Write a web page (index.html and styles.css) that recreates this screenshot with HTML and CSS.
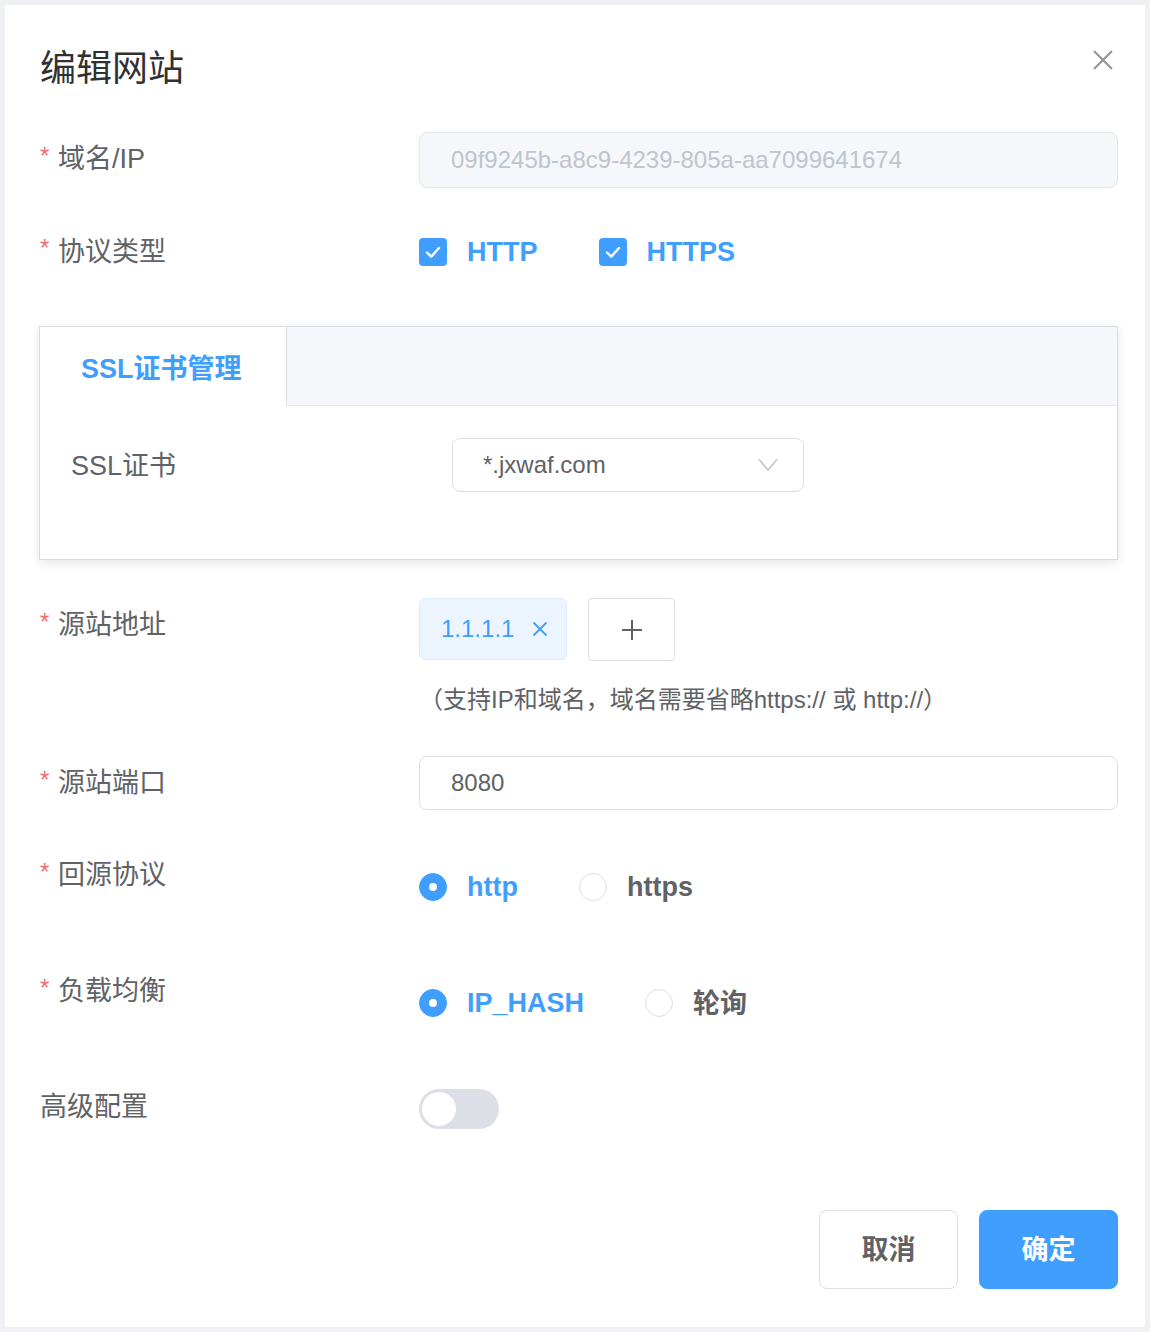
FILE: index.html
```html
<!DOCTYPE html>
<html lang="zh-CN">
<head>
<meta charset="utf-8">
<title>编辑网站</title>
<link rel="stylesheet" href="styles.css">
</head>
<body>
<div class="dialog">
  <div class="dialog-header">
    <span class="dialog-title">编辑网站</span>
    <span class="dialog-close">
      <svg width="20" height="20" viewBox="0 0 20 20"><path d="M1 1 L19 19 M19 1 L1 19" stroke="#909399" stroke-width="2" fill="none"/></svg>
    </span>
  </div>

  <div class="form">
    <div class="form-item item-domain">
      <div class="form-label required">域名/IP</div>
      <div class="form-content">
        <div class="input input-disabled">09f9245b-a8c9-4239-805a-aa7099641674</div>
      </div>
    </div>

    <div class="form-item item-protocol">
      <div class="form-label required">协议类型</div>
      <div class="form-content options">
        <span class="check-option">
          <span class="checkbox"><svg width="28" height="28" viewBox="0 0 28 28"><path d="M8 14.5 L12.3 18.6 L20 10" stroke="#fff" stroke-width="2.4" fill="none" stroke-linecap="round" stroke-linejoin="round"/></svg></span>
          <span class="option-text active">HTTP</span>
        </span>
        <span class="check-option">
          <span class="checkbox"><svg width="28" height="28" viewBox="0 0 28 28"><path d="M8 14.5 L12.3 18.6 L20 10" stroke="#fff" stroke-width="2.4" fill="none" stroke-linecap="round" stroke-linejoin="round"/></svg></span>
          <span class="option-text active">HTTPS</span>
        </span>
      </div>
    </div>

    <div class="tabs-card">
      <div class="tabs-header">
        <div class="tab tab-active">SSL证书管理</div>
      </div>
      <div class="tabs-body">
        <div class="ssl-row">
          <div class="ssl-label">SSL证书</div>
          <div class="select">
            <span>*.jxwaf.com</span>
            <svg width="20" height="14" viewBox="0 0 20 14"><path d="M1 1.5 L10 12 L19 1.5" stroke="#c0c4cc" stroke-width="1.6" fill="none"/></svg>
          </div>
        </div>
      </div>
    </div>

    <div class="form-item item-origin">
      <div class="form-label required">源站地址</div>
      <div class="form-content">
        <div class="tag-row">
          <span class="tag">1.1.1.1
            <svg width="16" height="16" viewBox="0 0 16 16"><path d="M1.5 1.5 L14.5 14.5 M14.5 1.5 L1.5 14.5" stroke="#409eff" stroke-width="1.8" fill="none"/></svg>
          </span>
          <span class="add-btn">
            <svg width="22" height="22" viewBox="0 0 22 22"><path d="M11 1 V21 M1 11 H21" stroke="#606266" stroke-width="2" fill="none"/></svg>
          </span>
        </div>
        <div class="help-text">（支持IP和域名，域名需要省略https:// 或 http://）</div>
      </div>
    </div>

    <div class="form-item item-port">
      <div class="form-label required">源站端口</div>
      <div class="form-content">
        <div class="input">8080</div>
      </div>
    </div>

    <div class="form-item item-radio">
      <div class="form-label required">回源协议</div>
      <div class="form-content options radio-content">
        <span class="radio-option gap-http">
          <span class="radio radio-on"></span>
          <span class="option-text active">http</span>
        </span>
        <span class="radio-option">
          <span class="radio"></span>
          <span class="option-text">https</span>
        </span>
      </div>
    </div>

    <div class="form-item item-radio item-lb">
      <div class="form-label required">负载均衡</div>
      <div class="form-content options radio-content">
        <span class="radio-option">
          <span class="radio radio-on"></span>
          <span class="option-text active">IP_HASH</span>
        </span>
        <span class="radio-option">
          <span class="radio"></span>
          <span class="option-text cjk">轮询</span>
        </span>
      </div>
    </div>

    <div class="form-item item-adv">
      <div class="form-label plain">高级配置</div>
      <div class="form-content switch-content">
        <span class="switch"><span class="switch-knob"></span></span>
      </div>
    </div>
  </div>

  <div class="dialog-footer">
    <button class="btn btn-default">取消</button>
    <button class="btn btn-primary">确定</button>
  </div>
</div>
</body>
</html>
```
FILE: styles.css
```css
* { box-sizing: border-box; }

html, body {
  margin: 0;
  padding: 0;
}

body {
  background: #f0f1f4;
  padding: 5px 5px 5px 5px;
  font-family: "Liberation Sans", "Noto Sans CJK SC", sans-serif;
  color: #606266;
}

.dialog {
  width: 1140px;
  background: #ffffff;
  border-radius: 2px;
  padding: 0 27px 38px 35px;
}

.dialog-header {
  display: flex;
  justify-content: space-between;
  align-items: flex-start;
  padding-top: 38px;
  padding-bottom: 39px;
}

.dialog-title {
  font-size: 36px;
  line-height: 48px;
  color: #303133;
  padding-top: 2px;
}

.dialog-close {
  display: flex;
  width: 20px;
  height: 20px;
  margin-top: 7px;
  margin-right: 5px;
}

.form-item {
  display: grid;
  grid-template-columns: 379px 1fr;
  align-items: start;
}

.form-label {
  font-size: 27px;
  line-height: 54px;
  color: #606266;
  white-space: nowrap;
}

.form-label.required::before {
  content: "*";
  color: #f56c6c;
  font-size: 24px;
  margin-right: 5px;
  display: inline-block;
  width: 13px;
  vertical-align: top;
  line-height: 48px;
}

.item-domain .form-label { line-height: 54px; }

.input {
  height: 54px;
  border: 1.5px solid #dcdfe6;
  border-radius: 8px;
  padding-left: 31px;
  font-size: 24px;
  line-height: 51px;
  color: #606266;
  background: #fff;
}

.input-disabled {
  height: 56px;
  line-height: 54px;
  background: #f5f7fa;
  border-color: #e4e7ed;
  color: #c0c4cc;
}

.item-protocol {
  margin-top: 36px;
}

.item-protocol .form-label { line-height: 56px; }

.options {
  display: flex;
  align-items: center;
  height: 56px;
}

.check-option,
.radio-option {
  display: flex;
  align-items: center;
  margin-right: 61px;
}

.checkbox {
  width: 28px;
  height: 28px;
  border-radius: 4px;
  background: #409eff;
  display: flex;
  margin-right: 20px;
}

.option-text {
  font-size: 27px;
  font-weight: 700;
  color: #606266;
}

.option-text.cjk {
  margin-top: -3px;
}

.option-text.active {
  color: #409eff;
}

.tabs-card {
  margin-top: 46px;
  margin-left: -1px;
  border: 1px solid #d8dbe1;
  background: #fff;
  box-shadow: 0 3px 10px rgba(0, 0, 0, 0.1);
}

.tabs-header {
  height: 79px;
  background: #f5f7fa;
  border-bottom: 1px solid #e4e7ed;
  display: flex;
}

.tab {
  font-size: 27px;
  font-weight: 700;
  line-height: 78px;
  padding: 3px 42px 0 41px;
  color: #409eff;
}

.tab-active {
  background: #fff;
  border-right: 1px solid #dcdfe6;
  height: 79px;
  width: 247px;
}

.tabs-body {
  padding: 32px 0 67px 31px;
}

.ssl-row {
  display: flex;
  align-items: center;
}

.ssl-label {
  width: 381px;
  font-size: 27px;
  color: #606266;
  margin-top: -3px;
}

.select {
  width: 352px;
  height: 54px;
  border: 1.5px solid #dcdfe6;
  border-radius: 8px;
  padding: 0 25px 0 30px;
  display: flex;
  align-items: center;
  justify-content: space-between;
  font-size: 24px;
  color: #606266;
}

.item-origin {
  margin-top: 38px;
}

.tag-row {
  display: flex;
  gap: 21px;
}

.tag {
  height: 62px;
  width: 148px;
  background: #ecf5ff;
  border: 1.5px solid #d9ecff;
  border-radius: 6px;
  color: #409eff;
  font-size: 24px;
  display: flex;
  align-items: center;
  justify-content: space-between;
  padding: 0 18px 0 21px;
}

.add-btn {
  width: 87px;
  height: 63px;
  border: 1.5px solid #dcdfe6;
  border-radius: 4px;
  display: flex;
  align-items: center;
  justify-content: center;
}

.help-text {
  margin-top: 21px;
  font-size: 24px;
  line-height: 36px;
  color: #606266;
  white-space: nowrap;
}

.item-port {
  margin-top: 38px;
}

.item-radio {
  margin-top: 38px;
}

.item-lb {
  margin-top: 50px;
}

.radio-content {
  margin-top: 12px;
  height: 54px;
}

.radio {
  width: 28px;
  height: 28px;
  border-radius: 50%;
  border: 1.5px solid #dcdfe6;
  background: #fff;
  margin-right: 20px;
  position: relative;
}

.radio-on {
  background: #409eff;
  border-color: #409eff;
}

.radio-on::after {
  content: "";
  position: absolute;
  left: 50%;
  top: 50%;
  width: 8px;
  height: 8px;
  margin: -4px 0 0 -4px;
  border-radius: 50%;
  background: #fff;
}

.item-adv {
  margin-top: 50px;
}

.switch-content {
  height: 54px;
  display: flex;
  align-items: center;
  padding-top: 4px;
}

.switch {
  width: 80px;
  height: 40px;
  border-radius: 20px;
  background: #dcdfe6;
  display: flex;
  align-items: center;
  padding-left: 3px;
}

.switch-knob {
  width: 34px;
  height: 34px;
  border-radius: 50%;
  background: #fff;
}

.dialog-footer {
  display: flex;
  justify-content: flex-end;
  gap: 21px;
  margin-top: 76px;
}

.btn {
  width: 139px;
  height: 79px;
  border-radius: 8px;
  font-family: "Liberation Sans", "Noto Sans CJK SC", sans-serif;
  font-size: 27px;
  font-weight: 700;
  line-height: 1;
  padding: 2px 0 0 0;
  cursor: pointer;
}

.btn-default {
  background: #fff;
  border: 1.5px solid #dcdfe6;
  color: #606266;
}

.btn-primary {
  background: #409eff;
  border: 1.5px solid #409eff;
  color: #fff;
}
```
